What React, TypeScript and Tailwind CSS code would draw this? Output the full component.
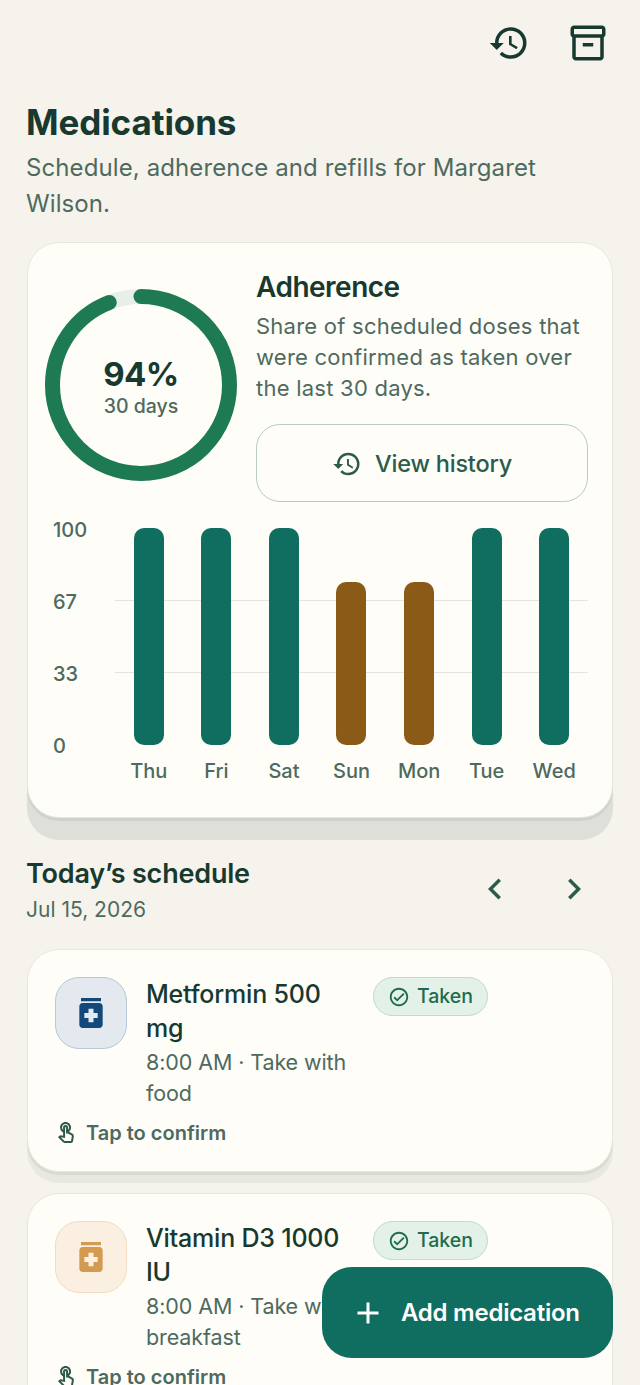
import React from "react";
import { MdHistory, MdOutlineInventory2, MdMedication, MdOutlineTouchApp, MdOutlineCheckCircle, MdChevronLeft, MdChevronRight, MdAdd } from "react-icons/md";

const days = [
  { d: "Thu", h: "h-[217px]", c: "bg-[#0f6e5f]" },
  { d: "Fri", h: "h-[217px]", c: "bg-[#0f6e5f]" },
  { d: "Sat", h: "h-[217px]", c: "bg-[#0f6e5f]" },
  { d: "Sun", h: "h-[163px]", c: "bg-[#8b5a16]" },
  { d: "Mon", h: "h-[163px]", c: "bg-[#8b5a16]" },
  { d: "Tue", h: "h-[217px]", c: "bg-[#0f6e5f]" },
  { d: "Wed", h: "h-[217px]", c: "bg-[#0f6e5f]" },
];

function Ring() {
  const r = 88.5;
  const c = 2 * Math.PI * r;
  return (
    <div className="relative w-[192px] h-[192px] shrink-0">
      <svg width="192" height="192" viewBox="0 0 192 192" className="-rotate-90">
        <circle cx="96" cy="96" r={r} fill="none" stroke="#e8efea" strokeWidth="15" />
        <circle cx="96" cy="96" r={r} fill="none" stroke="#1d7a52" strokeWidth="15" strokeLinecap="round" strokeDasharray={`${c * 0.94} ${c}`} />
      </svg>
      <div className="absolute inset-0 flex flex-col items-center justify-center pt-[6px]">
        <div className="text-[33px] leading-[36px] font-bold text-[#17392f] tracking-[-0.6px]">94%</div>
        <div className="text-[19.5px] leading-[28px] font-medium text-[#4e6a5f]">30 days</div>
      </div>
    </div>
  );
}

function MedCard({ name, sub, boxCls, iconCls }: { name: React.ReactNode; sub: React.ReactNode; boxCls: string; iconCls: string }) {
  return (
    <div className="rounded-[32px] bg-[#fefdf8] border border-[#e7e7e0] shadow-[0_3px_0_#d9dbd3,0_11px_0_#e7e8e1] px-[27px] pt-[27px] h-[223px]">
      <div className="flex items-start">
        <div className={`w-[72px] h-[72px] rounded-[24px] border flex items-center justify-center shrink-0 ${boxCls}`}>
          <MdMedication className={`w-[40px] h-[40px] ${iconCls}`} />
        </div>
        <div className="ml-[19px] w-[227px] shrink-0">
          <div className="text-[25px] leading-[34px] font-medium text-[#17392f] tracking-[-0.2px]">{name}</div>
          <div className="text-[21.5px] leading-[31px] mt-[2px] tracking-[-0.1px] text-[#4e6a5f]">{sub}</div>
        </div>
        <div className="h-[39px] w-[115px] rounded-full border border-[#bcdccc] bg-[#e3f1e8] flex items-center justify-center gap-[7px] text-[#1f6b4d] text-[19.5px] font-medium">
          <MdOutlineCheckCircle className="w-[22px] h-[22px]" />
          Taken
        </div>
      </div>
      <div className="flex items-center gap-[8px] mt-[10px] -ml-[1px] text-[20px] font-semibold text-[#4e6a5f] leading-[28px]">
        <MdOutlineTouchApp className="w-[24px] h-[24px] text-[#2f5a4b]" />
        Tap to confirm
      </div>
    </div>
  );
}

export default function App() {
  return (
    <div className="relative w-[640px] h-[1385px] overflow-hidden bg-[#f6f3ec] font-['Inter',sans-serif]">
      <div className="flex justify-end items-center gap-[37px] pt-[22px] pr-[31px] text-[#17392f]">
        <MdHistory className="w-[42px] h-[42px]" />
        <MdOutlineInventory2 className="w-[42px] h-[42px]" />
      </div>
      <div className="px-[27px]">
        <h1 className="mt-[34px] -ml-[1px] text-[35px] leading-[48px] font-bold text-[#17392f] tracking-[-0.1px]">Medications</h1>
        <p className="mt-[4px] -ml-[1px] text-[24px] leading-[36px] text-[#4e6a5f] tracking-[0.1px] w-[530px]">Schedule, adherence and refills for Margaret Wilson.</p>

        <div className="mt-[20px] h-[576px] rounded-[32px] bg-[#fefdf8] border border-[#e7e7e0] shadow-[0_3px_0_#cfd2ca,0_22px_0_#dedfd9] px-[17px] pt-[25px]">
          <div className="flex items-start">
            <div className="mt-[21px]"><Ring /></div>
            <div className="ml-[20px] flex-1 pr-[7px] -mt-[1px]">
              <div className="-ml-[1px] text-[28px] leading-[40px] font-semibold text-[#17392f] tracking-[-0.5px]">Adherence</div>
              <div className="-ml-[1px] text-[22px] leading-[31px] mt-[4px] tracking-[0.24px] text-[#4e6a5f]">Share of scheduled doses that were confirmed as taken over the last 30 days.</div>
              <div className="mt-[20px] -ml-[1px] h-[78px] pt-[2px] rounded-[24px] border border-[#b7cdc2] flex items-center justify-center gap-[13px] text-[#2a5c4c] text-[23.5px] font-medium tracking-[-0.2px]">
                <MdHistory className="w-[30px] h-[30px]" />
                View history
              </div>
            </div>
          </div>
          <div className="flex mt-[26px] pr-[7px]">
            <div className="w-[70px] h-[244px] flex flex-col justify-between pl-[8px] text-[20px] leading-[28px] text-[#4e6a5f] font-medium -mt-[12px]">
              <span>100</span><span>67</span><span>33</span><span>0</span>
            </div>
            <div className="relative flex-1 grid grid-cols-7">
              <div className="absolute left-0 right-0 top-[72px] h-[1px] bg-[#e5e5df]"></div>
              <div className="absolute left-0 right-0 top-[144px] h-[1px] bg-[#e5e5df]"></div>
              {days.map((x) => (
                <div key={x.d} className="relative flex flex-col items-center">
                  <div className="h-[217px] flex items-end">
                    <div className={`w-[30px] rounded-[10px] ${x.h} ${x.c}`}></div>
                  </div>
                  <div className="mt-[12px] text-[20px] leading-[28px] text-[#4e6a5f] font-medium">{x.d}</div>
                </div>
              ))}
            </div>
          </div>
        </div>

        <div className="flex items-center justify-between mt-[38px]">
          <div className="-ml-[1px]">
            <div className="text-[27px] leading-[36px] font-semibold text-[#17392f] tracking-[-0.2px]">Today’s schedule</div>
            <div className="text-[21px] leading-[36px] text-[#4e6a5f]">Jul 15, 2026</div>
          </div>
          <div className="flex items-center gap-[37px] pr-[18px] mb-[6px] text-[#2a5c4c]">
            <MdChevronLeft className="w-[42px] h-[42px]" />
            <MdChevronRight className="w-[42px] h-[42px]" />
          </div>
        </div>

        <div className="flex flex-col gap-[21px] mt-[21px]">
          <MedCard name={<>Metformin 500<br />mg</>} sub={<>8:00 AM · Take with<br />food</>} boxCls="bg-[#e3e9ee] border-[#b5c8d6]" iconCls="text-[#12487a]" />
          <MedCard name={<>Vitamin D3 1000<br />IU</>} sub={<>8:00 AM · Take with<br />breakfast</>} boxCls="bg-[#fbefe2] border-[#f2dcc2]" iconCls="text-[#d39a52]" />
        </div>
      </div>

      <div className="absolute left-[322px] top-[1267px] w-[291px] h-[91px] rounded-[30px] bg-[#0f6e5f] flex items-center pl-[28px] gap-[15px] text-white text-[24px] font-semibold tracking-[-0.25px]">
        <MdAdd className="w-[36px] h-[36px]" />
        Add medication
      </div>
    </div>
  );
}
